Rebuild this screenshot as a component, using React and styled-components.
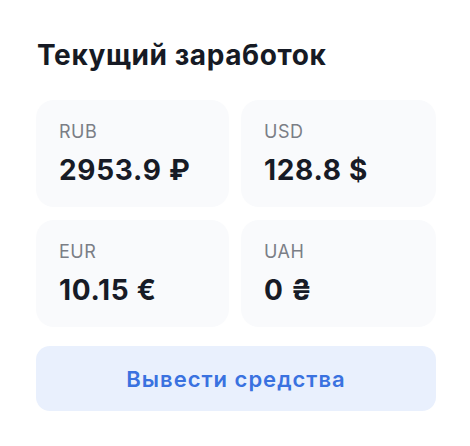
import styled, { createGlobalStyle } from 'styled-components'

const GlobalStyle = createGlobalStyle`
  body {
    margin: 0;
    background: #fff;
    font-family: Inter, "Noto Sans", sans-serif;
  }
`

const Panel = styled.section`
  width: 400px;
  padding: 38px 0 0 36px;
`

const Title = styled.h2`
  margin: 0 0 28px 1px;
  font-size: 28px;
  line-height: 34px;
  font-weight: 700;
  color: #161a24;
  letter-spacing: 0.6px;
`

const Grid = styled.div`
  display: grid;
  grid-template-columns: 193px 195px;
  gap: 13px 12px;
`

const Card = styled.div`
  height: 107px;
  box-sizing: border-box;
  padding: 21px 23px;
  border-radius: 18px;
  background: #f9fafc;
`

const Code = styled.div`
  font-size: 18px;
  line-height: 22px;
  font-weight: 400;
  color: #7b7e86;
  letter-spacing: 0.5px;
`

const Amount = styled.div`
  margin-top: 10px;
  font-size: 28px;
  line-height: 34px;
  font-weight: 700;
  color: #171b26;
  letter-spacing: 0.7px;
`

const Button = styled.button`
  display: block;
  width: 400px;
  height: 65px;
  margin-top: 19px;
  border: none;
  border-radius: 14px;
  background: #e9f0fd;
  color: #3a72e0;
  font-family: inherit;
  font-size: 22px;
  font-weight: 600;
  letter-spacing: 1px;
  cursor: pointer;
`

const balances = [
  { code: 'RUB', amount: '2953.9 ₽' },
  { code: 'USD', amount: '128.8 $' },
  { code: 'EUR', amount: '10.15 €' },
  { code: 'UAH', amount: '0 ₴' },
]

export default function App() {
  return (
    <>
      <GlobalStyle />
      <Panel>
        <Title>Текущий заработок</Title>
        <Grid>
          {balances.map((b) => (
            <Card key={b.code}>
              <Code>{b.code}</Code>
              <Amount>{b.amount}</Amount>
            </Card>
          ))}
        </Grid>
        <Button>Вывести средства</Button>
      </Panel>
    </>
  )
}
